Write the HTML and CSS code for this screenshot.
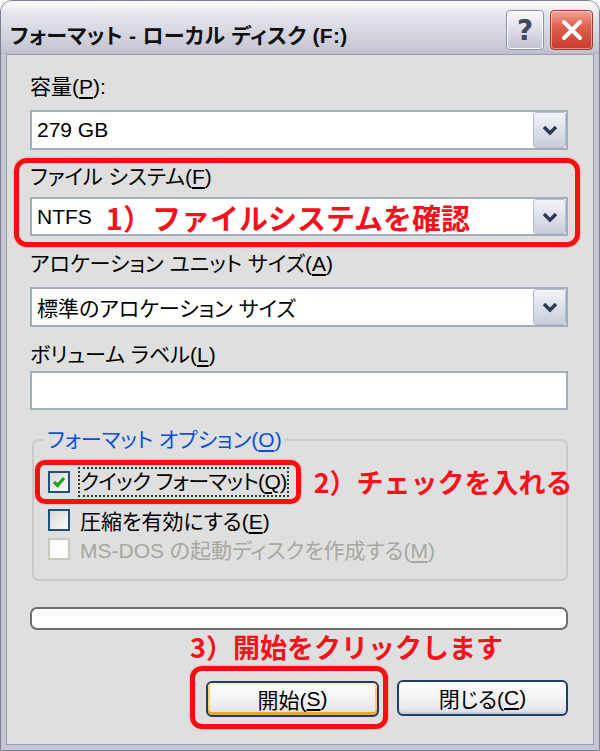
FILE: index.html
```html
<!DOCTYPE html>
<html lang="ja">
<head>
  <meta charset="UTF-8" />
  <title>フォーマット - ローカル ディスク (F:)</title>
  <link rel="stylesheet" href="styles.css">
</head>
<body>
  <div class="window">
    <div class="titlebar">
      <span class="title">フォーマット - ローカル ディスク (F:)</span>
      <div class="caption-btns">
        <span class="cap-btn help">?</span>
        <span class="cap-btn close">
          <svg width="24" height="24" viewBox="0 0 24 24"><path d="M4 4 L20 20 M20 4 L4 20" stroke="#fff" stroke-width="4" stroke-linecap="round" fill="none"/></svg>
        </span>
      </div>
    </div>

    <div class="client">
      <div class="label">容量(<u>P</u>):</div>
      <div class="combo">
        <span class="value">279 GB</span>
        <span class="drop"><svg width="16" height="12" viewBox="0 0 16 12"><path d="M2 3 L8 9 L14 3" stroke="#2e3b55" stroke-width="3.5" fill="none"/></svg></span>
      </div>

      <div class="mark mark-fs">
        <div class="label">ファイル システム(<u>F</u>)</div>
        <div class="combo">
          <span class="value">NTFS</span>
          <span class="note note-1">1）ファイルシステムを確認</span>
          <span class="drop"><svg width="16" height="12" viewBox="0 0 16 12"><path d="M2 3 L8 9 L14 3" stroke="#2e3b55" stroke-width="3.5" fill="none"/></svg></span>
        </div>
      </div>

      <div class="label sp-sm">アロケーション ユニット サイズ(<u>A</u>)</div>
      <div class="combo">
        <span class="value">標準のアロケーション サイズ</span>
        <span class="drop"><svg width="16" height="12" viewBox="0 0 16 12"><path d="M2 3 L8 9 L14 3" stroke="#2e3b55" stroke-width="3.5" fill="none"/></svg></span>
      </div>

      <div class="label sp-lg">ボリューム ラベル(<u>L</u>)</div>
      <div class="textbox"></div>

      <fieldset class="options">
        <legend>フォーマット オプション(<u>O</u>)</legend>
        <div class="quick-row">
          <div class="mark quick">
            <span class="box"><svg width="18" height="18" viewBox="0 0 18 18"><path d="M4 9 L7.5 12.5 L14 5" stroke="#21a121" stroke-width="3.2" fill="none"/></svg></span>
            <span class="focus">クイック フォーマット(<u>Q</u>)</span>
          </div>
          <span class="note note-2">2）チェックを入れる</span>
        </div>
        <div class="check-row row-2">
          <span class="box"></span>
          <span>圧縮を有効にする(<u>E</u>)</span>
        </div>
        <div class="check-row row-3 disabled">
          <span class="box"></span>
          <span>MS-DOS の起動ディスクを作成する(<u>M</u>)</span>
        </div>
      </fieldset>

      <div class="progress"></div>

      <div class="actions">
        <div class="note note-3">3）開始をクリックします</div>
        <div class="btn-row">
          <div class="mark start-mark">
            <span class="btn default">開始(<u>S</u>)</span>
          </div>
          <span class="btn close-btn">閉じる(<u>C</u>)</span>
        </div>
      </div>
    </div>
  </div>
</body>
</html>
```

FILE: styles.css
```css
* {
  box-sizing: border-box;
}

body {
  margin: 0;
  font-family: "Liberation Sans", "Noto Sans CJK JP", sans-serif;
  font-feature-settings: "palt";
  background: #fff;
  color: #000;
}

u {
  text-decoration-thickness: 2px;
  text-underline-offset: 3px;
}

.window {
  width: 600px;
  height: 751px;
  display: flex;
  flex-direction: column;
  background: #c5c5d3;
  border: 1px solid #7d7e94;
  border-radius: 12px 12px 0 0;
  overflow: hidden;
}

.titlebar {
  height: 53px;
  flex: none;
  display: flex;
  align-items: center;
  justify-content: space-between;
  padding: 0 6px 0 9px;
  background: linear-gradient(#fdfdfe, #e8e8ef 20%, #d8d8e2 55%, #c8c8d5 90%, #bbbbca);
}

.title {
  margin-top: 12px;
  font-weight: bold;
  font-size: 21px;
  letter-spacing: 0.3px;
  color: #111;
}

.caption-btns {
  display: flex;
  gap: 6px;
  margin-top: 5px;
}

.cap-btn {
  width: 38px;
  height: 40px;
  border-radius: 4px;
  display: flex;
  align-items: center;
  justify-content: center;
}

.help {
  background: linear-gradient(#fbfbfd, #e0e0ea 45%, #c2c2d4);
  border: 1px solid #8e90a8;
  box-shadow: inset 0 0 0 1px #fff;
  font: bold 28px "DejaVu Sans", sans-serif;
  color: #45475c;
}

.close {
  width: 43px;
  background: linear-gradient(#f2a596, #e0614f 40%, #c63b29);
  border: 1px solid #a33a2a;
  box-shadow: inset 0 0 0 1px rgba(255, 255, 255, 0.45);
}

.client {
  flex: 1;
  margin: 0 5px 5px;
  border: 1px solid #9c9cb0;
  background: #dfdfdf;
  padding: 20px 25px 0 23px;
  display: flex;
  flex-direction: column;
}

.label {
  font-size: 21px;
  line-height: 24px;
}

.label.sp-sm {
  margin-top: 5px;
}

.label.sp-lg {
  margin-top: 16px;
}

.combo {
  height: 40px;
  margin-top: 11px;
  border: 2px solid #a4adbc;
  background: #fff;
  display: flex;
  align-items: center;
  padding-left: 5px;
  font-size: 21px;
}

.drop {
  width: 33px;
  align-self: stretch;
  margin-left: auto;
  background: linear-gradient(#f3f4f8, #dee1ea 50%, #c9cdd9);
  border: 1px solid #b6bfcf;
  border-radius: 3px;
  display: flex;
  align-items: center;
  justify-content: center;
}

.textbox {
  height: 39px;
  margin-top: 4px;
  border: 2px solid #a4adbc;
  background: #fff;
}

/* red annotation marks */
.mark {
  border: 5px solid #f21010;
  border-radius: 13px;
  box-shadow: 0 0 2px rgba(255, 0, 0, 0.5);
}

.mark-fs {
  margin: 8px -12px 0 -16px;
  padding: 2px 7px 6px 11px;
}

.mark-fs .combo {
  margin-top: 8px;
  height: 39px;
}

.note {
  font-family: "Noto Sans CJK JP", sans-serif;
  font-feature-settings: normal;
  font-weight: bold;
  color: #f5121c;
  font-size: 28px;
  line-height: 32px;
  white-space: nowrap;
}

.note-1 {
  font-size: 29px;
  margin-left: 14px;
}

.note-2 {
  flex: none;
  font-size: 27px;
  margin-left: 13px;
}

.note-3 {
  font-size: 27px;
}

.options {
  margin: 18px 0 0 2px;
  border: 2px solid #cacaca;
  border-radius: 7px;
  padding: 8px 0 18px 0;
  min-width: 0;
}

.options legend {
  margin-left: 10px;
  padding: 0 3px;
  color: #0b4fd6;
  font-size: 21px;
  line-height: 24px;
}

.quick-row {
  display: flex;
  align-items: center;
  white-space: nowrap;
}

.quick {
  flex: none;
  display: flex;
  align-items: center;
  gap: 8px;
  margin-left: 1px;
  padding: 2px 7px 2px 8px;
  border-radius: 10px;
}

.focus {
  border: 2px dotted #333;
  font-size: 21px;
  line-height: 26px;
  letter-spacing: -0.6px;
}

.box {
  width: 22px;
  height: 22px;
  flex: none;
  border: 2px solid #1c5180;
  background: linear-gradient(135deg, #d9d9d3, #fafafa);
  display: flex;
  align-items: center;
  justify-content: center;
}

.check-row {
  display: flex;
  align-items: center;
  gap: 10px;
  margin-left: 14px;
  height: 24px;
  font-size: 21px;
  white-space: nowrap;
}

.row-2 {
  margin-top: 4px;
}

.row-3 {
  margin-top: 5px;
}

.check-row.disabled {
  color: #a7a7a0;
}

.check-row.disabled .box {
  border-color: #cac8bb;
  background: #fff;
}

.progress {
  height: 23px;
  margin-top: 26px;
  border: 2px solid #6e6e6e;
  border-radius: 7px;
  background: #fff;
}

.actions {
  align-self: flex-end;
  width: 378px;
  margin-top: 1px;
}

.btn-row {
  display: flex;
  align-items: center;
  justify-content: space-between;
  margin-top: 3px;
}

.start-mark {
  padding: 10px 4px 7px 11px;
  border-radius: 12px;
}

.btn {
  height: 36px;
  display: flex;
  align-items: center;
  justify-content: center;
  border: 2px solid #1f3e63;
  border-radius: 6px;
  background: linear-gradient(#ffffff, #f6f6f6 40%, #e8e8ee 80%, #d6dae6);
  font-size: 21px;
}

.btn.default {
  width: 173px;
  box-shadow: inset 0 2px 0 #fff0c8, inset 0 -3px 0 #f0a628, inset 2px 0 0 #f8d070, inset -2px 0 0 #f8d070;
}

.close-btn {
  width: 171px;
  box-shadow: inset 0 -2px 0 #c6d0e4;
}
```
